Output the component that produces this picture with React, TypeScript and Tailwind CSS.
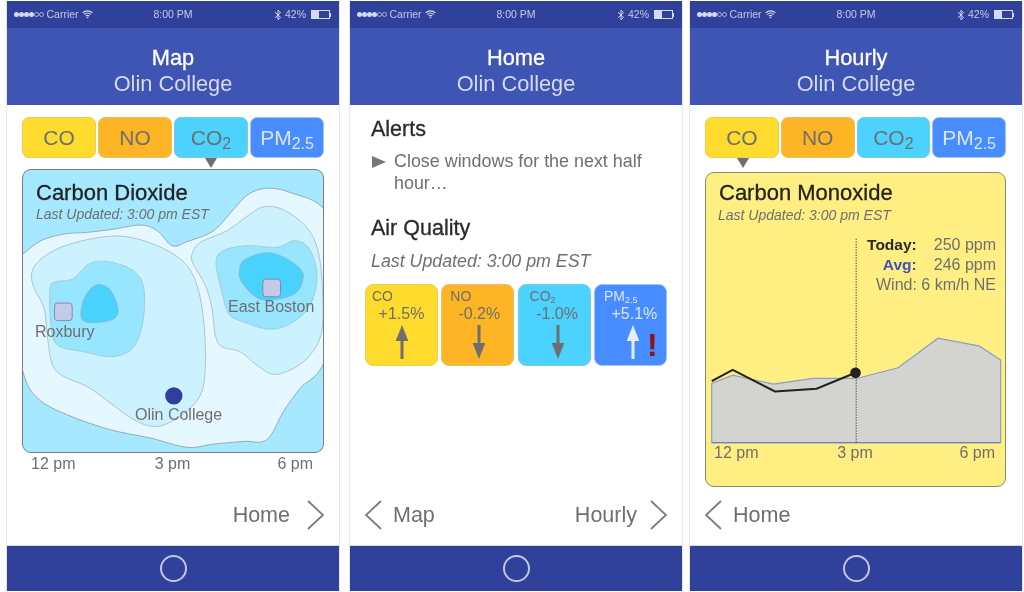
import React from "react";

const font = { fontFamily: '"Liberation Sans", Arial, sans-serif' };

type Pt = [number, number];

function smooth(pts: Pt[]) {
  const n = pts.length;
  let d = `M${pts[0][0]} ${pts[0][1]}`;
  for (let i = 0; i < n; i++) {
    const p0 = pts[(i - 1 + n) % n];
    const p1 = pts[i];
    const p2 = pts[(i + 1) % n];
    const p3 = pts[(i + 2) % n];
    const c1x = p1[0] + (p2[0] - p0[0]) / 6;
    const c1y = p1[1] + (p2[1] - p0[1]) / 6;
    const c2x = p2[0] - (p3[0] - p1[0]) / 6;
    const c2y = p2[1] - (p3[1] - p1[1]) / 6;
    d += `C${c1x.toFixed(1)} ${c1y.toFixed(1)} ${c2x.toFixed(1)} ${c2y.toFixed(1)} ${p2[0]} ${p2[1]}`;
  }
  return d + "Z";
}

const outer: Pt[] = [[40, 285], [66, 265], [120, 225], [190, 205], [260, 200], [340, 190], [420, 178], [470, 195], [515, 240], [560, 228], [640, 195], [700, 130], [745, 85], [800, 67], [870, 80], [975, 135], [1000, 300], [975, 580], [900, 670], [850, 740], [800, 825], [730, 830], [640, 838], [560, 848], [450, 820], [330, 795], [200, 750], [110, 700], [66, 620], [40, 440]];
const midL: Pt[] = [[92, 325], [115, 285], [180, 245], [280, 218], [370, 212], [470, 240], [550, 290], [590, 360], [610, 470], [615, 600], [600, 690], [545, 750], [470, 785], [400, 765], [330, 715], [260, 665], [190, 635], [155, 600], [140, 520], [130, 430], [100, 370]];
const midR: Pt[] = [[575, 265], [600, 230], [680, 195], [740, 152], [790, 123], [850, 132], [920, 185], [955, 260], [968, 380], [965, 500], [930, 570], [880, 610], [820, 628], [770, 600], [720, 560], [665, 545], [645, 510], [635, 430], [615, 360], [578, 295]];
const innerL: Pt[] = [[147, 375], [160, 350], [215, 340], [265, 295], [320, 288], [390, 310], [425, 350], [432, 420], [420, 500], [390, 555], [330, 575], [250, 560], [170, 540], [150, 480]];
const innerR: Pt[] = [[647, 290], [670, 255], [740, 240], [830, 245], [880, 225], [920, 240], [945, 290], [950, 350], [930, 420], [880, 470], [810, 492], [730, 470], [685, 445], [665, 380]];
const coreL: Pt[] = [[240, 445], [250, 400], [275, 365], [300, 358], [330, 375], [352, 430], [340, 460], [290, 472], [250, 468]];
const coreR: Pt[] = [[717, 320], [730, 285], [790, 262], [840, 270], [890, 300], [910, 330], [895, 375], [860, 395], [800, 405], [760, 390], [725, 350]];

function StatusBar() {
  return (
    <div className="relative flex h-[27px] shrink-0 items-center bg-[#2f419a] pl-[7px] pr-[8px] text-[10.5px] text-[#c3cae4]">
      <div className="flex items-center gap-[0.5px]">
        {[0, 1, 2, 3].map((i) => (
          <span key={i} className="h-[4.5px] w-[4.5px] rounded-full bg-[#d5daec]" />
        ))}
        <span className="h-[4.5px] w-[4.5px] rounded-full border border-[#aab3d8]" />
        <span className="h-[4.5px] w-[4.5px] rounded-full border border-[#aab3d8]" />
      </div>
      <span className="ml-[3px]">Carrier</span>
      <svg width="11" height="9" viewBox="0 0 11 9" className="ml-[3px]" fill="none" stroke="#d5daec" strokeWidth="1.1">
        <path d="M.6 2.8C3.4.2 7.6.2 10.4 2.8M2.2 4.5c2-1.8 4.6-1.8 6.6 0M3.8 6.1c1-.9 2.4-.9 3.4 0" />
        <path d="M5.5 8.6 4.5 7.400c.6-.4 1.400-.4 2 0z" fill="#d5daec" stroke="none" />
      </svg>
      <span className="absolute left-0 right-0 text-center">8:00 PM</span>
      <svg width="8" height="12" viewBox="0 0 8 12" className="ml-auto" fill="none" stroke="#d5daec" strokeWidth="1">
        <path d="M1 3.200 6.500 8.300 4 10.800V1.200l2.500 2.500L1 8.800" />
      </svg>
      <span className="ml-[3px]">42%</span>
      <div className="ml-[5px] flex items-center">
        <div className="h-[9px] w-[19px] border border-[#d5daec] bg-[linear-gradient(90deg,#d5daec_42%,transparent_42%)]" />
        <div className="h-[4px] w-[1px] bg-[#d5daec]" />
      </div>
    </div>
  );
}

function Header({ title }: { title: string }) {
  return (
    <div className="flex h-[77px] shrink-0 flex-col items-center justify-center bg-[#3f55b3] pt-[8px] text-[21.8px] leading-[26px]">
      <div className="text-white [-webkit-text-stroke:0.3px]">{title}</div>
      <div className="text-[#d6daec]">Olin College</div>
    </div>
  );
}

function Tabs({ arrow }: { arrow: "left" | "mid" }) {
  return (
    <div className="relative grid h-[41px] grid-cols-4 gap-[2px] text-[21px] text-[#6f6f6f]">
      <div className="flex items-center justify-center rounded-[7px] border border-[#e8cf55] bg-[#fedb2c]">CO</div>
      <div className="flex items-center justify-center rounded-[7px] border border-[#e8bf6a] bg-[#fdb526]">NO</div>
      <div className="flex items-center justify-center rounded-[7px] border border-[#7cc9e4] bg-[#4bd2ff]">
        <span>
          CO<sub className="text-[16px]">2</sub>
        </span>
      </div>
      <div className="flex items-center justify-center rounded-[7px] border border-[#a5c2ee] bg-[#478dff] text-[#dbe5f8]">
        <span>
          PM<sub className="text-[16px]">2.5</sub>
        </span>
      </div>
      <svg
        width="12"
        height="10"
        viewBox="0 0 12 10"
        className={arrow === "mid" ? "absolute left-[183px] top-[41px]" : "absolute left-[32px] top-[41px]"}
      >
        <path d="M0 0h12L6 10z" fill="#6f6f6f" />
      </svg>
    </div>
  );
}

function Chevron({ dir }: { dir: "left" | "right" }) {
  return (
    <svg width="17" height="30" viewBox="0 0 17 30" fill="none" stroke="#7b7b7b" strokeWidth="1.8">
      <path d={dir === "right" ? "M1 1l15 14L1 29" : "M16 1 1 15l15 14"} />
    </svg>
  );
}

function Nav({ left, right, gapClass }: { left?: string; right?: string; gapClass?: string }) {
  return (
    <div className="mb-[15px] mt-auto flex h-[30px] items-center px-[15px] text-[21.5px] text-[#6f6f6f]">
      {left && (
        <>
          <Chevron dir="left" />
          <span className="ml-[11px]">{left}</span>
        </>
      )}
      {right && (
        <>
          <span className="ml-auto">{right}</span>
          <span className={gapClass}>
            <Chevron dir="right" />
          </span>
        </>
      )}
    </div>
  );
}

function Phone({ title, children }: { title: string; children: React.ReactNode }) {
  return (
    <div className="flex h-[590px] w-[334px] shrink-0 flex-col border-x border-[#e6e6e6]">
      <StatusBar />
      <Header title={title} />
      <div className="flex flex-1 flex-col bg-white">{children}</div>
      <div className="flex h-[46px] shrink-0 items-center justify-center border-t border-[#d5d9ea] bg-[#2f419a]">
        <div className="h-[27px] w-[27px] rounded-full border-2 border-[#c0c7e2]" />
      </div>
    </div>
  );
}

function ContourMap() {
  return (
    <svg viewBox="66 12 903 850" className="absolute inset-0 h-full w-full" preserveAspectRatio="none">
      <path d={smooth(outer)} fill="#e5f7ff" stroke="#7d8c94" strokeWidth="2" />
      <g fill="#cdf2ff" stroke="#a3b7bf" strokeWidth="2.4">
        <path d={smooth(midL)} />
        <path d={smooth(midR)} />
      </g>
      <g fill="#98e5ff" stroke="#9fc4d1" strokeWidth="2.4">
        <path d={smooth(innerL)} />
        <path d={smooth(innerR)} />
      </g>
      <g fill="#4ad2ff" stroke="#8fb6c6" strokeWidth="2.4">
        <path d={smooth(coreL)} />
        <path d={smooth(coreR)} />
      </g>
      <rect x="161" y="413" width="53" height="53" rx="9" fill="#c5cae6" stroke="#7a7a8c" strokeWidth="2.4" />
      <rect x="788" y="341" width="53" height="53" rx="9" fill="#c5cae6" stroke="#7a7a8c" strokeWidth="2.4" />
      <circle cx="520" cy="693" r="26" fill="#2f3f9b" />
    </svg>
  );
}

function MapScreen() {
  return (
    <div className="flex flex-1 flex-col px-[15px] pt-[12px]">
      <Tabs arrow="mid" />
      <div className="relative mt-[11px] h-[284px] overflow-hidden rounded-[9px] border border-[#7d7d7d] bg-[#a5e8ff] text-[16px] text-[#6f6f6f]">
        <ContourMap />
        <div className="absolute left-[13px] top-[10px] text-[22px] leading-[26px] text-[#222222] [-webkit-text-stroke:0.3px]">Carbon Dioxide</div>
        <div className="absolute left-[13px] top-[36px] text-[14px] italic leading-[17px]">Last Updated: 3:00 pm EST</div>
        <div className="absolute left-[12px] top-[150px]">Roxbury</div>
        <div className="absolute left-[205px] top-[125px]">East Boston</div>
        <div className="absolute left-[112px] top-[233px]">Olin College</div>
      </div>
      <div className="mt-[1px] flex justify-between pl-[9px] pr-[11px] text-[16px] leading-[20px] text-[#6f6f6f]">
        <span>12 pm</span>
        <span className="mr-[8px]">3 pm</span>
        <span>6 pm</span>
      </div>
    </div>
  );
}

function Arrow({ dir, color }: { dir: "up" | "down"; color: string }) {
  return (
    <svg width="16" height="36" viewBox="0 0 16 36" className="block">
      {dir === "up" ? (
        <path d="M6.500 35V17H1.700L8 1l6.300 16H9.500V35Z" fill={color} />
      ) : (
        <path d="M6.500 1V19H1.700L8 35l6.300-16H9.500V1Z" fill={color} />
      )}
    </svg>
  );
}

function HomeScreen() {
  return (
    <div className="flex flex-1 flex-col">
      <div className="px-[21px] pt-[11px] text-[#6f6f6f]">
        <div className="text-[21.5px] leading-[26px] text-[#2a2a2a] [-webkit-text-stroke:0.3px]">Alerts</div>
        <div className="mt-[8px] flex text-[17.9px] leading-[22px]">
          <svg width="15" height="12" viewBox="0 0 15 12" className="mt-[6px] shrink-0">
            <path d="M1 0l14 6-14 6z" fill="#777777" />
          </svg>
          <div className="ml-[8px] w-[270px]">Close windows for the next half hour…</div>
        </div>
        <div className="mt-[21px] text-[21.5px] leading-[26px] text-[#2a2a2a] [-webkit-text-stroke:0.3px]">Air Quality</div>
        <div className="mt-[8px] text-[17.8px] italic leading-[24px]">Last Updated: 3:00 pm EST</div>
      </div>
      <div className="mt-[11px] flex gap-[3.3px] pl-[15px]">
        <div className="flex h-[82px] w-[73px] flex-col rounded-[8px] border border-[#e8cf55] bg-[#fedb2c] text-[#6f6f6f]">
          <div className="pl-[6px] pt-[3px] text-[14px] leading-[16px]">CO</div>
          <div className="text-center text-[16px] leading-[19px]">+1.5%</div>
          <div className="ml-[28px] mt-[1px]"><Arrow dir="up" color="#6f6f6f" /></div>
        </div>
        <div className="flex h-[82px] w-[73px] flex-col rounded-[8px] border border-[#e8bf6a] bg-[#fdb526] text-[#6f6f6f]">
          <div className="pl-[8px] pt-[3px] text-[14px] leading-[16px]">NO</div>
          <div className="pl-[3px] text-center text-[16px] leading-[19px]">-0.2%</div>
          <div className="ml-[29px] mt-[1px]"><Arrow dir="down" color="#6f6f6f" /></div>
        </div>
        <div className="flex h-[82px] w-[73px] flex-col rounded-[8px] border border-[#7cc9e4] bg-[#4bd2ff] text-[#6f6f6f]">
          <div className="pl-[11px] pt-[3px] text-[14px] leading-[16px]">CO<sub className="text-[9px]">2</sub></div>
          <div className="pl-[6px] text-center text-[16px] leading-[19px]">-1.0%</div>
          <div className="ml-[31px] mt-[1px]"><Arrow dir="down" color="#6f6f6f" /></div>
        </div>
        <div className="relative flex h-[82px] w-[73px] flex-col rounded-[8px] border border-[#a5c2ee] bg-[#478dff] text-[#dbe5f8]">
          <div className="pl-[9px] pt-[3px] text-[14px] leading-[16px]">PM<sub className="text-[9px]">2.5</sub></div>
          <div className="pl-[8px] text-center text-[16px] leading-[19px]">+5.1%</div>
          <div className="ml-[30px] mt-[1px]"><Arrow dir="up" color="#e6edf9" /></div>
          <span className="absolute left-[52px] top-[42px] text-[32px] font-bold leading-[36px] text-[#8e1216]">!</span>
        </div>
      </div>
    </div>
  );
}

function HourlyChart() {
  return (
    <svg viewBox="60 50 880 625" className="block h-[208px] w-[293px]">
      <path
        d="M65 490 128 465 250 492 370 475 500 475 625 443 745 354 870 378 933 420V668H65Z"
        fill="#d3d3cf"
        stroke="#8b9cc8"
        strokeWidth="3.5"
      />
      <path d="M65 668H933" stroke="#6f82c0" strokeWidth="3.5" />
      <path d="M499 55V668" stroke="#222222" strokeWidth="2.500" strokeDasharray="4 4" />
      <path d="M65 483 128 449 255 514 380 506 497 458" fill="none" stroke="#222222" strokeWidth="6" />
      <circle cx="497" cy="458" r="16" fill="#222222" />
    </svg>
  );
}

function HourlyScreen() {
  return (
    <div className="flex flex-1 flex-col pl-[15px] pr-[16px] pt-[12px]">
      <Tabs arrow="left" />
      <div className="relative mt-[14px] h-[315px] rounded-[9px] border border-[#8d8a6a] bg-[#ffee82] text-[#6f6f6f]">
        <div className="pl-[13px] pt-[7px] text-[22px] leading-[26px] text-[#222222] [-webkit-text-stroke:0.3px]">Carbon Monoxide</div>
        <div className="pl-[12px] pt-[1px] text-[14px] italic leading-[17px]">Last Updated: 3:00 pm EST</div>
        <div className="ml-[4px] mt-[13px]">
          <HourlyChart />
        </div>
        <div className="mt-[-2px] flex justify-between pl-[8px] pr-[10px] text-[16px] leading-[20px]">
          <span>12 pm</span>
          <span className="mr-[8px]">3 pm</span>
          <span>6 pm</span>
        </div>
        <div className="absolute right-[9px] top-[62px] grid grid-cols-[auto_auto] text-right text-[16px] leading-[20px]">
          <span className="text-[15.500px] font-bold text-[#2a2a2a]">Today:</span>
          <span className="ml-[17px]">250 ppm</span>
          <span className="text-[15.500px] font-bold text-[#3f55b3]">Avg:</span>
          <span>246 ppm</span>
          <span className="col-span-2">Wind: 6 km/h NE</span>
        </div>
      </div>
    </div>
  );
}

export default function App() {
  return (
    <div style={font} className="flex h-[592px] w-[1024px] gap-[9px] overflow-hidden bg-white pl-[6px] pt-[1px] blur-[0.6px]">
      <Phone title="Map">
        <MapScreen />
        <Nav right="Home" gapClass="ml-[17px]" />
      </Phone>
      <Phone title="Home">
        <HomeScreen />
        <Nav left="Map" right="Hourly" gapClass="ml-[13px]" />
      </Phone>
      <div className="-ml-[3px]">
        <Phone title="Hourly">
          <HourlyScreen />
          <Nav left="Home" />
        </Phone>
      </div>
    </div>
  );
}
